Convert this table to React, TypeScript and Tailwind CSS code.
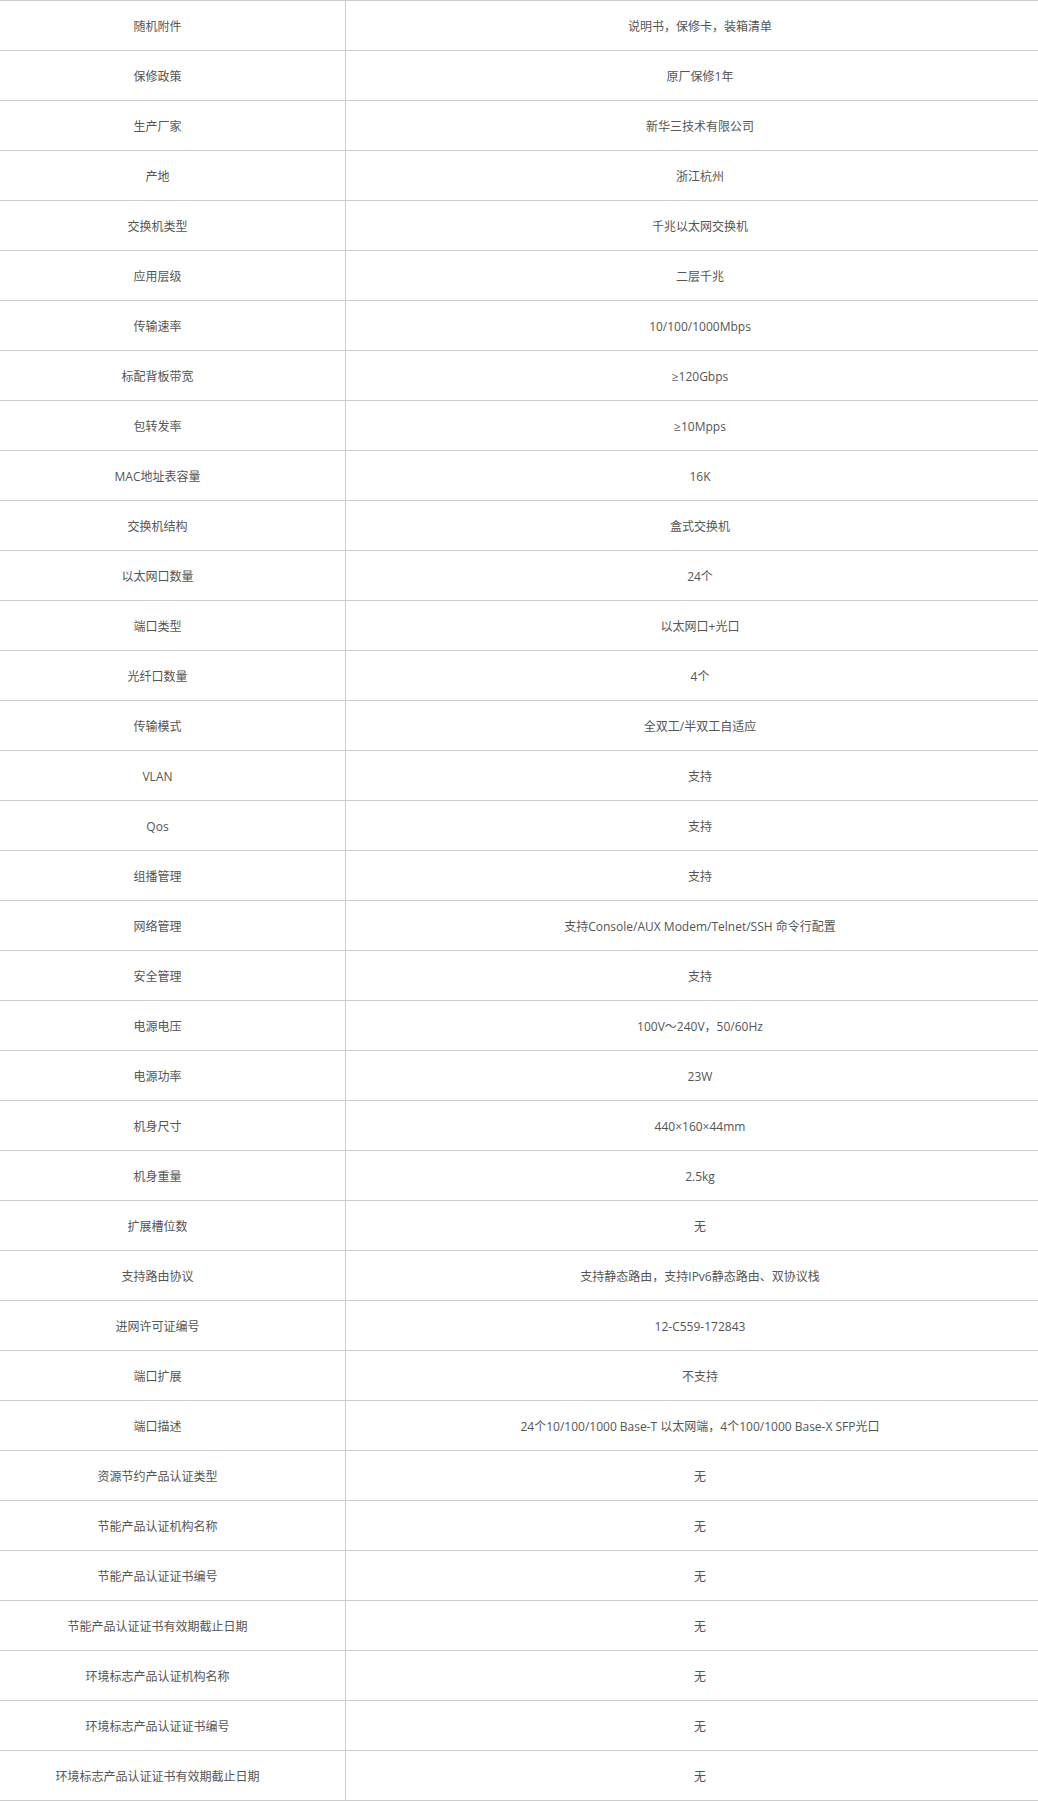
import React from "react";

const specs: [string, string][] = [
  ["随机附件", "说明书，保修卡，装箱清单"],
  ["保修政策", "原厂保修1年"],
  ["生产厂家", "新华三技术有限公司"],
  ["产地", "浙江杭州"],
  ["交换机类型", "千兆以太网交换机"],
  ["应用层级", "二层千兆"],
  ["传输速率", "10/100/1000Mbps"],
  ["标配背板带宽", "≥120Gbps"],
  ["包转发率", "≥10Mpps"],
  ["MAC地址表容量", "16K"],
  ["交换机结构", "盒式交换机"],
  ["以太网口数量", "24个"],
  ["端口类型", "以太网口+光口"],
  ["光纤口数量", "4个"],
  ["传输模式", "全双工/半双工自适应"],
  ["VLAN", "支持"],
  ["Qos", "支持"],
  ["组播管理", "支持"],
  ["网络管理", "支持Console/AUX Modem/Telnet/SSH 命令行配置"],
  ["安全管理", "支持"],
  ["电源电压", "100V～240V，50/60Hz"],
  ["电源功率", "23W"],
  ["机身尺寸", "440×160×44mm"],
  ["机身重量", "2.5kg"],
  ["扩展槽位数", "无"],
  ["支持路由协议", "支持静态路由，支持IPv6静态路由、双协议栈"],
  ["进网许可证编号", "12-C559-172843"],
  ["端口扩展", "不支持"],
  ["端口描述", "24个10/100/1000 Base-T 以太网端，4个100/1000 Base-X SFP光口"],
  ["资源节约产品认证类型", "无"],
  ["节能产品认证机构名称", "无"],
  ["节能产品认证证书编号", "无"],
  ["节能产品认证证书有效期截止日期", "无"],
  ["环境标志产品认证机构名称", "无"],
  ["环境标志产品认证证书编号", "无"],
  ["环境标志产品认证证书有效期截止日期", "无"],
];

const App = () => {
  return (
    <div
      className="w-[1038px] bg-white text-[12px] text-[#555555]"
      style={{ fontFamily: '"Open Sans", "Noto Sans CJK SC", sans-serif' }}
    >
      {specs.map(([label, value], i) => (
        <div
          key={label}
          className={`flex h-[50px] border-t border-[#cccccc] pt-[2px] ${
            i === specs.length - 1 ? "h-[51px] border-b" : ""
          }`}
        >
          {/* LEFT - LABEL */}
          <div className="-mt-[2px] flex w-[346px] items-center justify-center border-r border-[#cccccc] pt-[2px] pr-[30px]">
            {label}
          </div>

          {/* RIGHT - VALUE */}
          <div className="flex flex-1 items-center justify-center pl-[16px]">
            {value}
          </div>
        </div>
      ))}
    </div>
  );
};

export default App;
